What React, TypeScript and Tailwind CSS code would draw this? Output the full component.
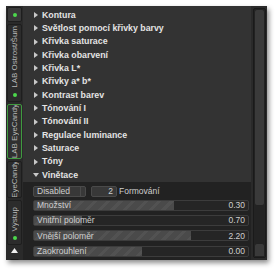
const rows = [
  "Kontura",
  "Světlost pomocí křivky barvy",
  "Křivka saturace",
  "Křivka obarvení",
  "Křivka L*",
  "Křivky a* b*",
  "Kontrast barev",
  "Tónování I",
  "Tónování II",
  "Regulace luminance",
  "Saturace",
  "Tóny",
];

const sliders = [
  { label: "Množství", value: "0.30", fill: 140 },
  { label: "Vnitřní poloměr", value: "0.70", fill: 48 },
  { label: "Vnější poloměr", value: "2.20", fill: 157 },
  { label: "Zaokrouhlení", value: "0.00", fill: 108 },
];

const Dot = () => <span className="h-[4px] w-[4px] shrink-0 rounded-full bg-[#4cd84c]" />;

const Tab = ({ label, dot, active, h }: { label?: string; dot?: boolean; active?: boolean; h: number }) => (
  <div
    style={{ height: h }}
    className={`flex w-[15px] shrink-0 flex-col items-center gap-[5px] overflow-hidden rounded-[2px] border ${
      dot ? "justify-end pb-[4px]" : "justify-center"
    } ${active ? "border-[#3f9a3f] bg-[#303030]" : "border-[#1e1e1e] bg-[#2c2c2c]"}`}
  >
    {label && (
      <span className="rotate-180 whitespace-nowrap text-[8px] leading-none text-[#b8b8b8] [writing-mode:vertical-rl]">
        {label}
      </span>
    )}
    {dot && <Dot />}
  </div>
);

const Arrow = ({ down }: { down?: boolean }) => (
  <svg width="6" height="6" viewBox="0 0 6 6" className="shrink-0">
    {down ? <polygon points="0,1 6,1 3,5" fill="#c8c8c8" /> : <polygon points="1,0 5,3 1,6" fill="#c8c8c8" />}
  </svg>
);

export default function App() {
  return (
    <div className="h-[270px] w-[276px] bg-white pl-[6px] pt-[6px] font-['Liberation_Sans',sans-serif]">
      <div className="flex h-[254px] w-[261px] bg-[#2a2a2a] shadow-[2px_3px_5px_rgba(0,0,0,0.45)]">
        {/* tab strip */}
        <div className="flex w-[17px] shrink-0 flex-col items-center gap-[2px] overflow-hidden pt-[1px]">
          <div className="flex h-[15px] w-[15px] shrink-0 items-center justify-center rounded-[2px] border border-[#1e1e1e] bg-[#3a3a3a]">
            <Dot />
          </div>
          <Tab label="LAB Ostrost/Šum" dot h={78} />
          <Tab label="LAB EyeCandy" active h={55} />
          <Tab label="EyeCandy" h={37} />
          <Tab label="Výstup" dot h={45} />
          <svg width="7" height="5" viewBox="0 0 7 5" className="mt-[1px] shrink-0">
            <polygon points="0,5 3.5,0 7,5" fill="#eeeeee" />
          </svg>
          <div className="mt-[4px] h-[4px] w-[9px] shrink-0 rounded-t-[2px] bg-[#1a1a1a]" />
        </div>

        {/* main list */}
        <div className="flex w-[228px] shrink-0 flex-col bg-[#333333]">
          <div className="pt-[2.33px]">
            {rows.map(r => (
              <div key={r} className="flex h-[13.33px] items-center gap-[3px] pl-[10px]">
                <Arrow />
                <span className="text-[8.8px] font-bold leading-none text-[#e4e4e4]">{r}</span>
              </div>
            ))}
            <div className="flex h-[13.33px] items-center gap-[3px] pl-[10px]">
              <Arrow down />
              <span className="text-[8.8px] font-bold leading-none text-[#e4e4e4]">Vinětace</span>
            </div>
          </div>
          <div className="flex flex-1 flex-col bg-[#222222] pl-[10px] pr-[2px] pt-[4.3px]">
            <div className="flex h-[11px] items-center">
              <div className="flex h-full w-[53px] items-center rounded-[2px] border border-[#4a4a4a] bg-[#383838]">
                <span className="flex-1 pl-[3px] text-[8.5px] leading-none text-[#cfcfcf]">Disabled</span>
                <span className="h-full w-[5px] border-l border-[#4a4a4a]" />
              </div>
              <div className="ml-[5px] flex h-full w-[26px] items-center justify-end rounded-[2px] border border-[#4a4a4a] bg-[#383838] pr-[3px] text-[8.5px] leading-none text-[#cfcfcf]">
                2
              </div>
              <span className="ml-[2px] text-[8.5px] leading-none text-[#cfcfcf]">Formování</span>
            </div>
            <div className="mt-[3px] flex flex-col gap-[4.3px]">
              {sliders.map(s => (
                <div
                  key={s.label}
                  className="relative flex h-[11px] items-center justify-between overflow-hidden rounded-[2px] border border-[#3c3c3c] bg-[#252525]"
                >
                  <div
                    className="absolute inset-y-0 left-0 bg-[#4a4a4a] bg-[repeating-linear-gradient(135deg,#4a4a4a_0px,#4a4a4a_6px,#525252_6px,#525252_9px)]"
                    style={{ width: s.fill }}
                  />
                  <span className="relative pl-[3px] text-[8.5px] leading-none text-[#d0d0d0]">{s.label}</span>
                  <span className="relative pr-[3px] text-[8.5px] leading-none text-[#d0d0d0]">{s.value}</span>
                </div>
              ))}
            </div>
          </div>
        </div>

        {/* scrollbar */}
        <div className="flex w-[16px] shrink-0 flex-col items-center bg-[#2a2a2a] pt-[2px]">
          <div className="flex h-[250px] w-[13px] flex-col rounded-[2px] border border-[#1a1a1a] bg-[#232323]">
            <div className="h-[197px] rounded-[3px] border border-[#222] bg-[#3a3a3a]" />
            <div className="mt-auto h-[14px] rounded-t-[3px] border border-[#222] bg-[#3a3a3a]" />
          </div>
        </div>
      </div>
    </div>
  );
}
